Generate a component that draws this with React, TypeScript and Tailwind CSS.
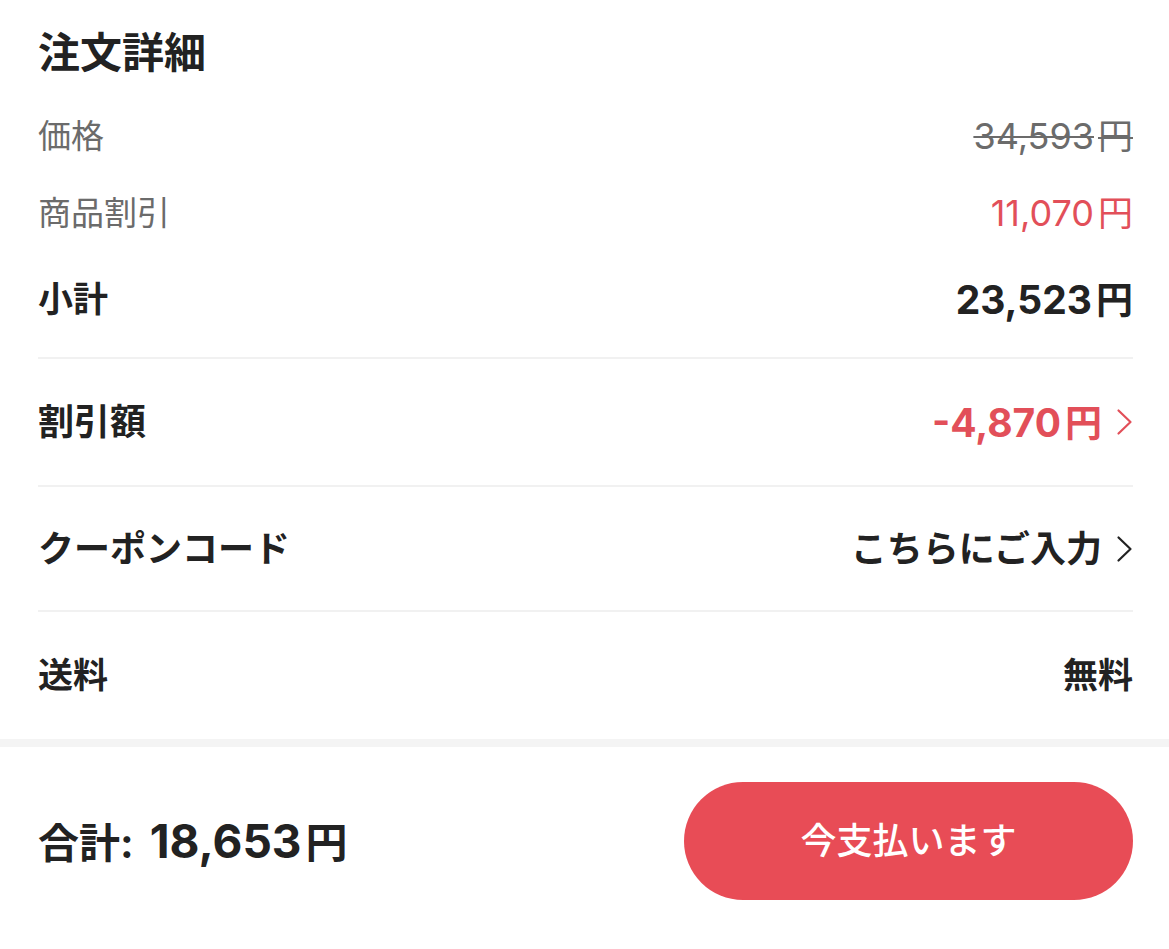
import React from 'react'

const font = { fontFamily: 'Inter, "Noto Sans CJK JP", sans-serif' }

const Chevron = ({ className }: { className?: string }) => (
  <svg viewBox="0 0 17 28" className={className} fill="none" stroke="currentColor" strokeWidth="2.2" strokeLinecap="round" strokeLinejoin="round">
    <path d="M2.5 2.5 L14.5 14 L2.5 25.5" />
  </svg>
)

const Divider = () => <div className="h-[2px] w-full bg-[#f1f1f1]" />

// amount with a slightly smaller yen sign, as in the native app
const Yen = ({ value, className, yen = 'text-[36px]' }: { value: string; className?: string; yen?: string }) => (
  <span className={`flex items-baseline leading-none ${className ?? ''}`}>
    <span>{value}</span>
    <span className={`ml-[4px] ${yen}`}>円</span>
  </span>
)

export default function App() {
  return (
    <div className="min-h-[949px] w-full bg-white text-[#222222]" style={font}>
      <div className="pl-[38px] pr-[36px]">
        <div className="flex h-[106px] items-center">
          <h1 className="text-[42px] font-bold leading-none">注文詳細</h1>
        </div>

        <div className="flex h-[60px] items-center justify-between text-[33px] leading-none text-[#6b6b6b]">
          <span>価格</span>
          <span className="line-through decoration-[2px]">
            <Yen value="34,593" className="text-[36px]" yen="text-[35px]" />
          </span>
        </div>

        <div className="flex h-[94px] items-center justify-between text-[33px] leading-none">
          <span className="text-[#6b6b6b]">商品割引</span>
          <Yen value="11,070" className="text-[36px] text-[#e24f59]" yen="text-[35px]" />
        </div>

        <div className="flex h-[78px] items-center justify-between text-[35px] font-bold leading-none">
          <span>小計</span>
          <Yen value="23,523" className="text-[39px]" yen="text-[37px]" />
        </div>
        <div className="h-[19px]" />
        <Divider />

        <div className="flex h-[126px] items-center justify-between text-[36px] font-bold leading-none">
          <span>割引額</span>
          <span className="flex items-center gap-[14px] text-[#e24f59]">
            <Yen value="-4,870" className="text-[39px]" yen="text-[37px]" />
            <Chevron className="h-[28px] w-[17px]" />
          </span>
        </div>
        <Divider />

        <div className="flex h-[123px] items-center justify-between text-[36px] font-bold leading-none">
          <span>クーポンコード</span>
          <span className="flex items-center gap-[14px]">
            こちらにご入力
            <Chevron className="h-[28px] w-[17px]" />
          </span>
        </div>
        <Divider />

        <div className="flex h-[127px] items-center justify-between text-[35px] font-bold leading-none">
          <span>送料</span>
          <span>無料</span>
        </div>
      </div>

      <div className="h-[8px] w-full bg-[#f4f4f4]" />

      <div className="flex items-center justify-between pb-[49px] pl-[38px] pr-[36px] pt-[35px]">
        <span className="flex items-baseline font-bold leading-none">
          <span className="text-[41px]">合計:</span>
          <Yen value="18,653" className="ml-[16px] text-[46px]" yen="text-[42px]" />
        </span>
        <button className="flex h-[118px] w-[449px] items-center justify-center rounded-full bg-[#e84c56] text-[36px] font-medium text-white">
          今支払います
        </button>
      </div>
    </div>
  )
}
